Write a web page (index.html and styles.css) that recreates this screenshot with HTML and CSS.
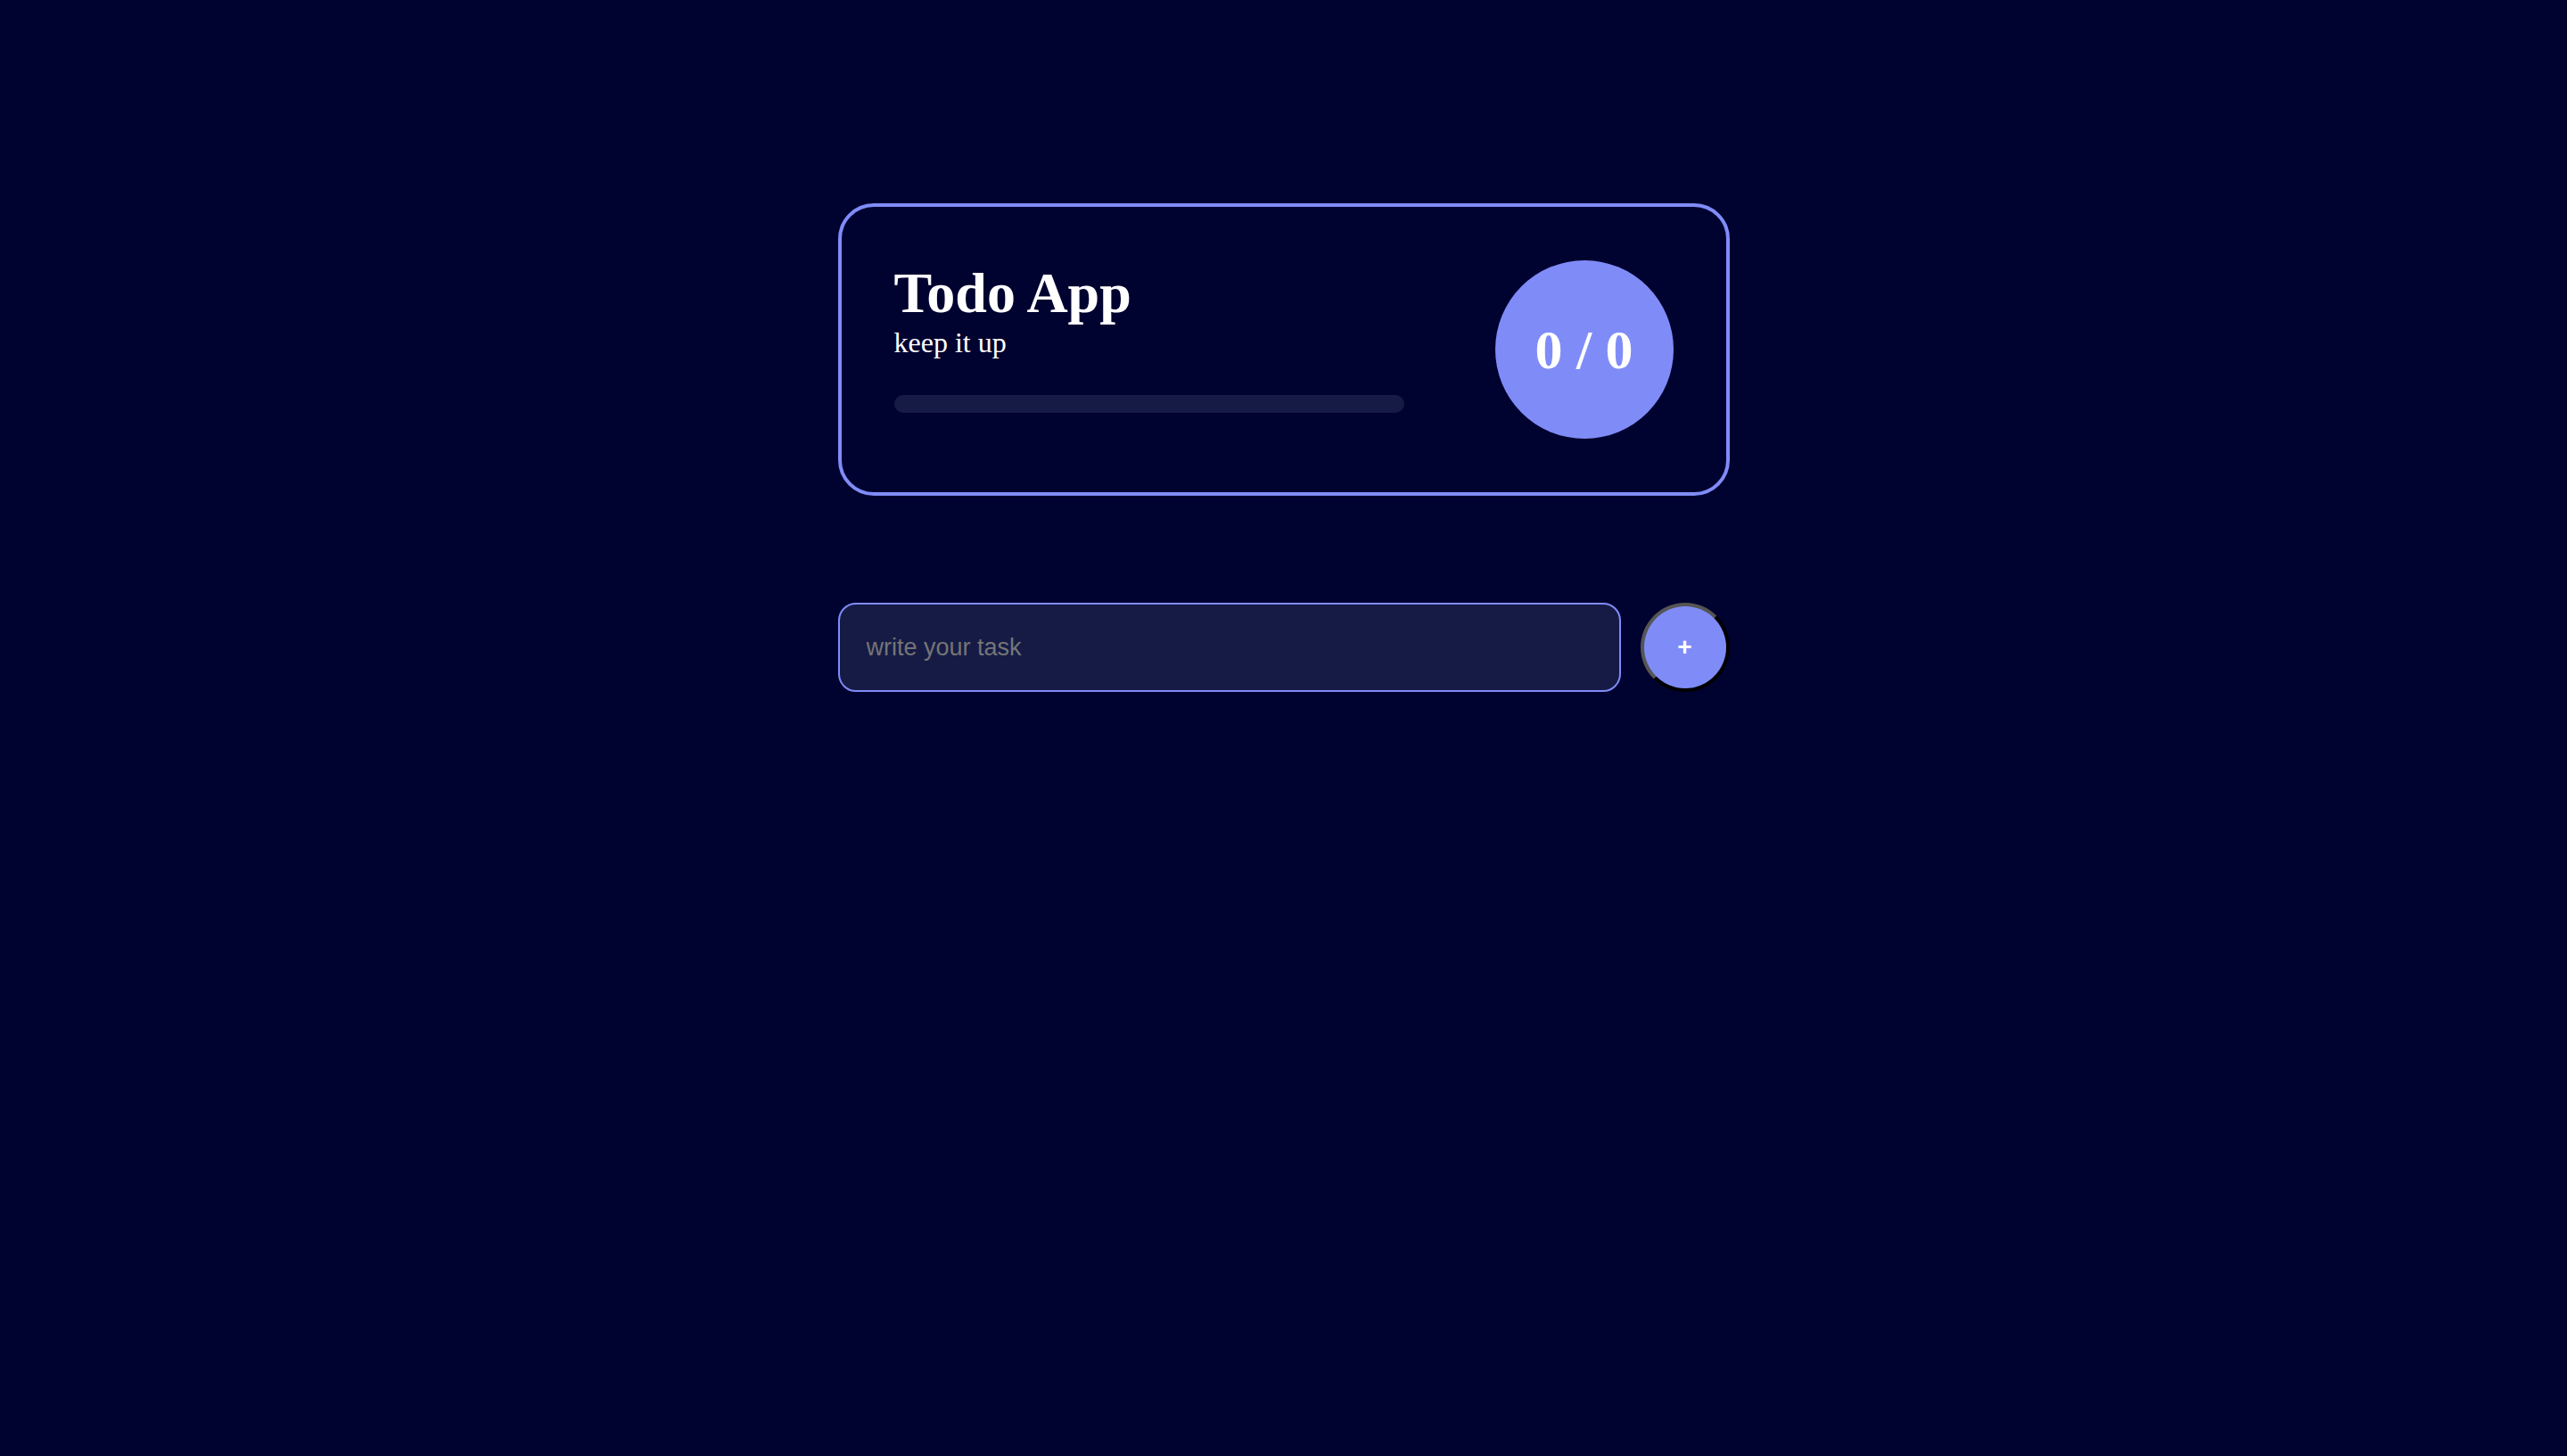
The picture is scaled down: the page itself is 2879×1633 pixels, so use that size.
FILE: index.html
```html
<!DOCTYPE html>
<html lang="en">
<head>
	<meta charset="UTF-8">
	<title>Todo App</title>
	<link rel="stylesheet" href="styles.css">
</head>
<body>
<div class="wrapper">
	<div class="stats">
		<div class="details">
			<h1>Todo App</h1>
			<p>keep it up</p>
			<div class="bar"><div class="fill" style="width:0%"></div></div>
		</div>
		<div class="number">0 / 0</div>
	</div>
	<form class="add">
		<input class="task" type="text" placeholder="write your task">
		<button class="plus" type="button">+</button>
	</form>
</div>
</body>
</html>
```

FILE: styles.css
```css
body {margin:0; background:#000230; color:#fff; font-family:"Liberation Serif", "Times New Roman", serif;}
.wrapper {width:1000px; margin:0 auto; padding-top:228px;}

.stats {display:flex; justify-content:space-between; align-items:flex-start; padding:60px 59px; border:4px solid #7f8cf8; border-radius:40px;}
.details h1 {margin:0; font-size:64px; font-weight:700;}
.details p {margin:0; font-size:32px;}
.bar {width:572px; height:20px; margin-top:40px; background:#161b46; border-radius:10px; overflow:hidden;}
.fill {height:100%; background:#7f8cf8;}

.number {width:200px; height:200px; border-radius:50%; background:#7f8cf8; display:flex; align-items:center; justify-content:center; font-size:62px; font-weight:700;}

.add {display:flex; gap:22px; margin-top:120px;}
.task {flex:1; height:100px; box-sizing:border-box; padding:0 30px; background:#161b46; border:2px solid #7f8cf8; border-radius:20px; color:#fff; font:27px "Liberation Sans", Arial, sans-serif; outline:none;}
.task::placeholder {color:#757575;}
.plus {width:100px; height:100px; border-radius:50%; background:#7f8cf8; border:4px solid; border-color:#555 #000 #000 #555; color:#fff; font:700 28px "Liberation Sans", Arial, sans-serif; cursor:pointer; padding:0;}
```
